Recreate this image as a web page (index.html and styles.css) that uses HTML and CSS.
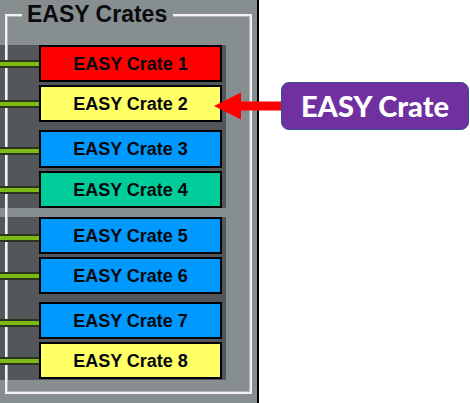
FILE: index.html
```html
<!DOCTYPE html>
<html lang="en">
<head>
<meta charset="utf-8">
<meta name="viewport" content="width=device-width, initial-scale=1">
<title>EASY Crates</title>
<link rel="stylesheet" href="styles.css">
</head>
<body>
<main class="page">
  <section class="panel" aria-labelledby="panel-title">
    <h1 class="title" id="panel-title">EASY Crates</h1>
    <div class="groups">
      <div class="group">
        <div class="pair">
          <div class="row"><span class="wire"></span><button class="crate red" type="button">EASY Crate 1</button></div>
          <div class="row"><span class="wire"></span><button class="crate yellow" type="button">EASY Crate 2</button></div>
        </div>
        <div class="pair">
          <div class="row"><span class="wire low"></span><button class="crate blue tall" type="button">EASY Crate 3</button></div>
          <div class="row"><span class="wire"></span><button class="crate green" type="button">EASY Crate 4</button></div>
        </div>
      </div>
      <div class="group">
        <div class="pair">
          <div class="row"><span class="wire low"></span><button class="crate blue" type="button">EASY Crate 5</button></div>
          <div class="row"><span class="wire"></span><button class="crate blue" type="button">EASY Crate 6</button></div>
        </div>
        <div class="pair">
          <div class="row"><span class="wire low"></span><button class="crate blue" type="button">EASY Crate 7</button></div>
          <div class="row"><span class="wire"></span><button class="crate yellow" type="button">EASY Crate 8</button></div>
        </div>
      </div>
    </div>
  </section>
  <aside class="note">
    <svg class="arrow" width="70" height="28" viewBox="0 0 70 28" aria-hidden="true"><path d="M0 14 27 0.5V9.5H70V18.5H27V27.5Z" fill="#f00"/></svg>
    <p class="label">EASY Crate</p>
  </aside>
</main>
</body>
</html>
```
FILE: styles.css
```css
* {
  box-sizing: border-box;
}

body {
  margin: 0;
  background: #fff;
  font-family: "Liberation Sans", Arial, sans-serif;
}

.page {
  display: flex;
  align-items: stretch;
  min-height: 100vh;
}

.panel {
  position: relative;
  flex: 1;
  padding-bottom: 23px;
  border-right: 2px solid #000;
  background: #868e90;
}

/* Engraved frame that runs over the dark group backgrounds. */
.panel::before {
  content: "";
  position: absolute;
  inset: 14px 5px 9px 5px;
  border: 2px solid #f2f0f2;
  outline: 1px solid #b4b6b8;
  outline-offset: -3px;
  pointer-events: none;
}

.title {
  position: relative;
  z-index: 1;
  width: fit-content;
  height: 28px;
  margin: 0 0 0 22px;
  padding: 0 6px 0 5px;
  background: #868e90;
  color: #0b0b0d;
  font-size: 23px;
  line-height: 28px;
  white-space: nowrap;
}

.groups {
  display: flex;
  flex-direction: column;
  gap: 9px;
  margin: 17px 31px 0 0;
}

.group {
  display: flex;
  flex-direction: column;
  gap: 8px;
  padding-right: 4px;
  background: #54575a;
}

.group:last-child {
  padding-bottom: 1px;
}

.pair {
  display: flex;
  flex-direction: column;
  gap: 3px;
}

.row {
  position: relative;
  z-index: 1;
  display: flex;
  align-items: center;
}

.wire {
  width: 39px;
  height: 8px;
  border: solid #2b3420;
  border-width: 2px 0;
  background: #7dba14;
}

.wire.low {
  margin-top: 4px;
}

.crate {
  flex: 1;
  height: 37px;
  padding: 0;
  border: 2px solid #000;
  border-radius: 0;
  color: #06080c;
  font: bold 18px/32px "Liberation Sans", Arial, sans-serif;
  white-space: nowrap;
}

.crate.tall {
  height: 38px;
}

.red {
  background: #f00;
}

.yellow {
  background: #ff6;
}

.blue {
  background: #09f;
}

.green {
  background: #00cc99;
}

.note {
  position: relative;
  z-index: 2;
  display: flex;
  align-items: center;
  align-self: flex-start;
  margin: 82px 1px 0 -45px;
}

.arrow {
  display: block;
  margin-right: -3px;
}

.label {
  width: 188px;
  margin: 0;
  border: 1px solid #2f528f;
  border-radius: 8px;
  background: #7030a0;
  color: #fff;
  font: 900 29px/46px Lato, "Open Sans", sans-serif;
  text-align: center;
  white-space: nowrap;
}
```
